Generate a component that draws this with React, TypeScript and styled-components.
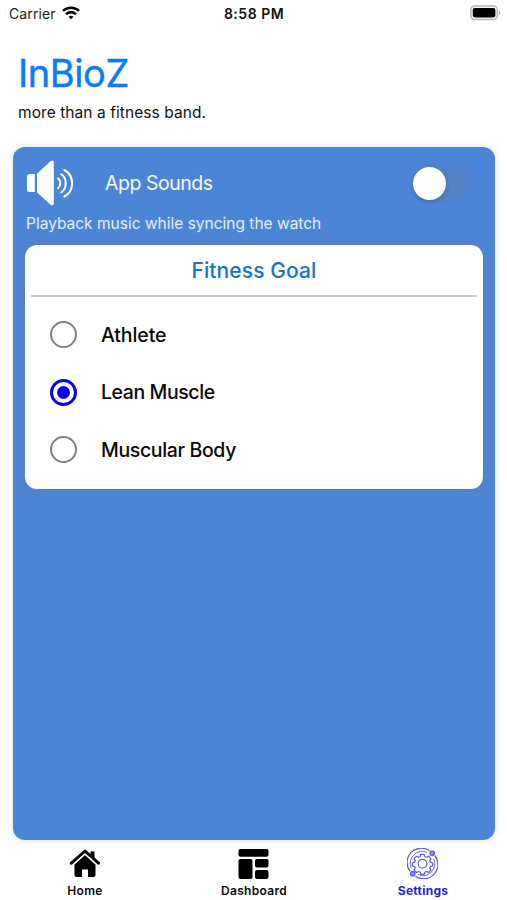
import React, { useState } from "react";
import styled, { createGlobalStyle } from "styled-components";

const GlobalStyle = createGlobalStyle`
  * { box-sizing: border-box; }
  body { margin: 0; background: #fff; font-family: Inter, "Liberation Sans", sans-serif; color: #111; overflow: hidden; }
  button { font: inherit; color: inherit; border: 0; padding: 0; background: none; text-align: left; }
`;

const Screen = styled.div`
  width: 507px;
  height: 900px;
  display: flex;
  flex-direction: column;
  background: #fff;
  white-space: nowrap;
  overflow: hidden;
`;

const StatusBar = styled.header`
  height: 28px;
  flex: none;
  display: grid;
  grid-template-columns: 1fr auto 1fr;
  align-items: center;
  padding: 0 6px 2px 9px;
  font-size: 14px;
`;

const Carrier = styled.div`
  display: flex;
  align-items: center;
  gap: 6px;
  letter-spacing: 0.1px;
  color: #222;
`;

const Clock = styled.div`
  font-weight: 600;
  letter-spacing: 0.5px;
  margin-right: 2px;
`;

const BatterySlot = styled.div`
  display: flex;
  justify-content: flex-end;
`;

const Brand = styled.div`
  flex: none;
  height: 119px;
  padding: 22px 18px 0;
`;

const Title = styled.h1`
  margin: 0;
  font-size: 38px;
  line-height: 47px;
  font-weight: 400;
  letter-spacing: -0.4px;
  color: #0a7aff;
  -webkit-text-stroke: 0.4px #0a7aff;
`;

const Tagline = styled.p`
  margin: 5px 0 0;
  font-size: 15.5px;
  line-height: 22px;
  letter-spacing: 0.07px;
`;

const Panel = styled.main`
  flex: none;
  width: 482px;
  height: 693px;
  margin-left: 13px;
  padding: 0 12px;
  border-radius: 12px;
  background: #4d85d6;
  box-shadow: 0 0 9px rgba(0, 0, 0, 0.13);
`;

const SoundRow = styled.div`
  height: 65px;
  display: flex;
  align-items: center;
  padding: 7px 13px 0 2px;
`;

const SoundLabel = styled.span`
  flex: 1;
  margin-left: 31px;
  font-size: 19.5px;
  letter-spacing: -0.48px;
  color: #f2f6fd;
`;

const Switch = styled.button<{ $on: boolean }>`
  width: 59px;
  height: 37px;
  padding: 2px;
  display: flex;
  justify-content: ${(p) => (p.$on ? "flex-end" : "flex-start")};
  border-radius: 19px;
  background: ${(p) => (p.$on ? "#34c759" : "rgba(120, 120, 128, 0.16)")};
`;

const Knob = styled.span`
  width: 33px;
  height: 33px;
  border-radius: 50%;
  background: #fff;
  box-shadow: 0 2px 5px rgba(0, 0, 0, 0.18);
`;

const Hint = styled.p`
  margin: 0;
  padding-left: 1px;
  height: 33px;
  font-size: 15.5px;
  line-height: 23px;
  color: #e4edfa;
`;

const Card = styled.section`
  height: 244px;
  padding: 0 6px;
  border-radius: 12px;
  background: #fff;
  box-shadow: 0 0 7px rgba(110, 120, 140, 0.6);
`;

const CardTitle = styled.h2`
  margin: 0;
  height: 52px;
  border-bottom: 2px solid #ccc;
  text-align: center;
  font-size: 21px;
  line-height: 52px;
  font-weight: 500;
  letter-spacing: 0.1px;
  color: #1673c8;
`;

const Options = styled.div`
  padding: 9px 0 0 19px;
`;

const Option = styled.button`
  width: 100%;
  height: 57.5px;
  display: flex;
  align-items: center;
  gap: 24px;
`;

const Radio = styled.span<{ $selected: boolean }>`
  width: 27px;
  height: 27px;
  display: grid;
  place-items: center;
  border-radius: 50%;
  border: ${(p) => (p.$selected ? "3px solid #0b00ee" : "2px solid #808080")};
`;

const RadioDot = styled.span`
  width: 13px;
  height: 13px;
  border-radius: 50%;
  background: #0b00ee;
`;

const OptionLabel = styled.span<{ $spacing: number }>`
  font-size: 19.5px;
  font-weight: 500;
  letter-spacing: ${(p) => p.$spacing}px;
  color: #080808;
`;

const TabBar = styled.nav`
  flex: 1;
  display: grid;
  grid-template-columns: repeat(3, 1fr);
`;

const Tab = styled.button<{ $active?: boolean }>`
  display: flex;
  flex-direction: column;
  align-items: center;
  padding-top: 8px;
  color: ${(p) => (p.$active ? "#2c1ce5" : "#080808")};
`;

const TabLabel = styled.span<{ $active?: boolean }>`
  margin-top: 4px;
  font-size: 12px;
  line-height: 15px;
  padding-left: 1px;
  letter-spacing: ${(p) => (p.$active ? 0.25 : 0.3)}px;
  font-weight: ${(p) => (p.$active ? 700 : 600)};
`;

const WifiIcon = () => (
  <svg width="18" height="14" viewBox="0 0 18 14" fill="none" stroke="#050505" strokeWidth="2.7">
    <path d="M1 4.9C5.3.7 12.7.7 17 4.9" />
    <path d="M4 8.2c2.7-2.8 7.3-2.8 10 0" />
    <path d="M6.5 10.7C8 9.3 10 9.3 11.5 10.7L9 13.3Z" fill="#050505" stroke="none" />
  </svg>
);

const BatteryIcon = () => (
  <svg width="31" height="16" viewBox="0 0 31 16">
    <rect x=".8" y="1" width="26.5" height="13.6" rx="4" fill="#f5f5f5" stroke="#b8b8b8" strokeWidth="1.5" />
    <rect x="2.8" y="3" width="22.6" height="9.6" rx="2" fill="#000" />
    <path d="M28.8 5.5c2 .7 2 4.1 0 4.8Z" fill="#aaa" />
  </svg>
);

const SpeakerIcon = () => (
  <svg width="47" height="46" viewBox="0 0 47 46" fill="#fff">
    <path d="M2.3 14H7.8V32H2.3Q0 32 0 29.5V16.5Q0 14 2.3 14Z" />
    <path d="M10 13.8 23.4 1.2Q26.8-.8 26.8 3V43Q26.8 46.8 23.4 44.8L10 32.2Z" />
    <g fill="none" stroke="#fff" strokeWidth="2" strokeLinecap="round">
      <path d="M31 18.4C34.1 20.8 34.1 25.8 31 28.2" />
      <path d="M34.3 14.3C40.2 18.2 40.2 28.4 34.3 32.3" />
      <path d="M37.3 10C47.7 15.6 47.7 31 37.3 36.6" />
    </g>
  </svg>
);

const HomeIcon = () => (
  <svg width="31" height="31" viewBox="0 0 31 31">
    <path d="M21.5 5V3.5H25.5V12L21.5 8Z" />
    <path d="M2.3 15.2 16 3 29.5 15.2" fill="none" stroke="#000" strokeWidth="3" strokeLinecap="round" strokeLinejoin="round" />
    <path d="M16 7.2 26.5 16.5V27Q26.5 29 24.5 29H19V21.5H13V29H7.5Q5.5 29 5.5 27V16.5Z" />
  </svg>
);

const DashboardIcon = () => (
  <svg width="31" height="31" viewBox="0 0 31 31">
    <rect x=".5" y="1" width="30" height="7.7" rx="2" />
    <rect x=".5" y="11" width="14" height="20" rx="2" />
    <rect x="17" y="11" width="13.5" height="8.5" rx="2" />
    <rect x="17" y="22" width="13.5" height="9" rx="2" />
  </svg>
);

const SettingsIcon = () => (
  <svg width="31" height="31" viewBox="0 0 31 31" fill="none" stroke="#625bd8" strokeWidth="1.35">
    <path d="M22.6 2.8A14.3 14.3 0 0 0 3.1 23.3M8.4 28.2A14.3 14.3 0 0 0 27.9 7.7" />
    <path d="M20 4.4A12 12 0 0 0 4.2 20M11 26.6A12 12 0 0 0 26.8 11" strokeWidth=".9" />
    <circle cx="25.2" cy="5.3" r="2.2" fill="#9691ea" />
    <circle cx="5.8" cy="25.7" r="2.2" fill="#9691ea" />
    <g transform="translate(15.5 15.5) scale(.93) translate(-15.5 -16.2)">
      <path d="M13.7 6.5h3.6l.8 2.4 1.5.6 2.3-1.1 2.6 2.6-1.2 2.2.7 1.6 2.4.8v3.1l-2.4.8-.7 1.6 1.2 2.2-2.6 2.6-2.3-1.1-1.5.6-.8 2.4h-3.6l-.8-2.4-1.5-.6-2.3 1.1-2.6-2.6 1.2-2.2-.7-1.6-2.4-.8v-3.1l2.4-.8.7-1.6-1.2-2.2L9.1 8.4l2.3 1.1 1.5-.6Z" strokeLinejoin="round" />
      <circle cx="15.5" cy="16.4" r="4.7" />
    </g>
  </svg>
);

const goals = [
  { name: "Athlete", spacing: -0.1 },
  { name: "Lean Muscle", spacing: -0.42 },
  { name: "Muscular Body", spacing: -0.36 },
];

export default function App() {
  const [sounds, setSounds] = useState(false);
  const [goal, setGoal] = useState("Lean Muscle");

  return (
    <>
      <GlobalStyle />
      <Screen>
        <StatusBar>
          <Carrier>Carrier <WifiIcon /></Carrier>
          <Clock>8:58 PM</Clock>
          <BatterySlot><BatteryIcon /></BatterySlot>
        </StatusBar>
        <Brand>
          <Title>InBioZ</Title>
          <Tagline>more than a fitness band.</Tagline>
        </Brand>
        <Panel>
          <SoundRow>
            <SpeakerIcon />
            <SoundLabel>App Sounds</SoundLabel>
            <Switch $on={sounds} role="switch" aria-checked={sounds} aria-label="App Sounds" onClick={() => setSounds(!sounds)}>
              <Knob />
            </Switch>
          </SoundRow>
          <Hint>Playback music while syncing the watch</Hint>
          <Card>
            <CardTitle>Fitness Goal</CardTitle>
            <Options role="radiogroup">
              {goals.map(({ name, spacing }) => (
                <Option key={name} role="radio" aria-checked={goal === name} onClick={() => setGoal(name)}>
                  <Radio $selected={goal === name}>{goal === name && <RadioDot />}</Radio>
                  <OptionLabel $spacing={spacing}>{name}</OptionLabel>
                </Option>
              ))}
            </Options>
          </Card>
        </Panel>
        <TabBar>
          <Tab><HomeIcon /><TabLabel>Home</TabLabel></Tab>
          <Tab><DashboardIcon /><TabLabel>Dashboard</TabLabel></Tab>
          <Tab $active><SettingsIcon /><TabLabel $active>Settings</TabLabel></Tab>
        </TabBar>
      </Screen>
    </>
  );
}
